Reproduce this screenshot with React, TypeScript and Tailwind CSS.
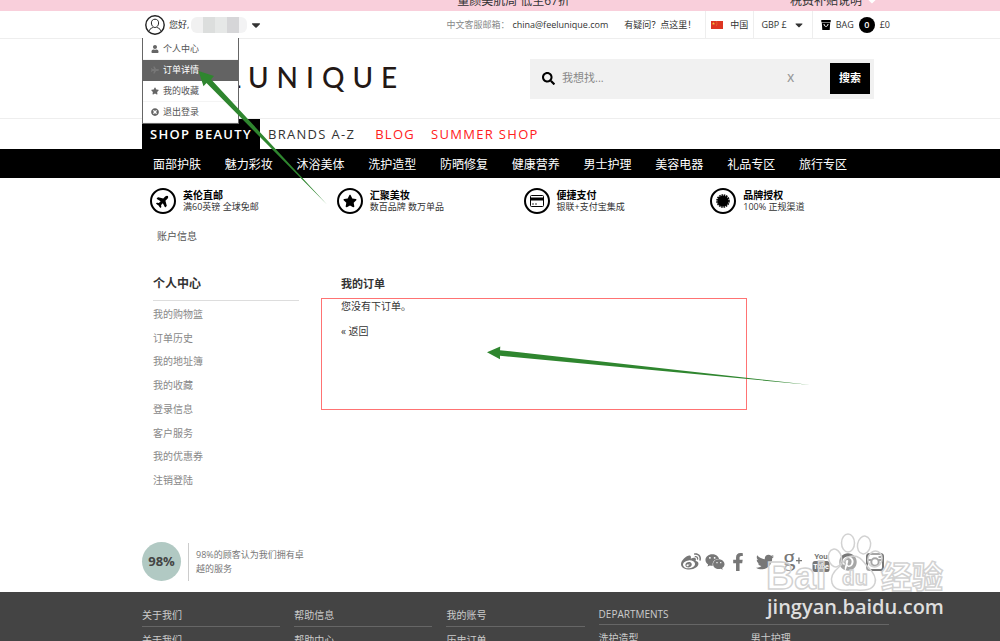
import { useState } from "react";
import { FaCaretDown, FaFacebookF, FaPinterest, FaPlane, FaSearch, FaStar, FaTimesCircle, FaTwitter, FaUser, FaWeibo, FaWeixin } from "react-icons/fa";

const accountMenu = [
  { label: '个人中心', icon: FaUser },
  { label: '订单详情', icon: FaPlane },
  { label: '我的收藏', icon: FaStar },
  { label: '退出登录', icon: FaTimesCircle },
]

const categories = ['面部护肤', '魅力彩妆', '沐浴美体', '洗护造型', '防晒修复', '健康营养', '男士护理', '美容电器', '礼品专区', '旅行专区']

const sideLinks = ['我的购物篮', '订单历史', '我的地址簿', '我的收藏', '登录信息', '客户服务', '我的优惠券', '注销登陆']

const footerColumns = [
  { title: '关于我们', link: '关于我们' },
  { title: '帮助信息', link: '帮助中心' },
  { title: '我的账号', link: '历史订单' },
]

function CardIcon() {
  return (
    <svg viewBox="0 0 14 12" className="w-[14px] h-3" fill="none" stroke="#000">
      <rect x="0.5" y="0.5" width="13" height="11" rx="1" />
      <path d="M0 4h14" strokeWidth="3" />
      <path d="M2 9h2M5 9h2" strokeWidth="0.8" />
    </svg>
  )
}

function SealIcon() {
  return (
    <svg viewBox="0 0 14 14" className="w-[14px] h-[14px]">
      <circle cx="7" cy="7" r="5.6" />
      <circle cx="7" cy="7" r="6" fill="none" stroke="#000" strokeWidth="1.6" strokeDasharray="1.6 0.76" />
    </svg>
  )
}

const benefits = [
  { title: '英伦直邮', text: '满60英镑 全球免邮', icon: <FaPlane className="-rotate-45" size={14} /> },
  { title: '汇聚美妆', text: '数百品牌 数万单品', icon: <FaStar size={14} /> },
  { title: '便捷支付', text: '银联+支付宝集成', icon: <CardIcon /> },
  { title: '品牌授权', text: '100% 正规渠道', icon: <SealIcon /> },
]

function Avatar() {
  return (
    <svg viewBox="0 0 20 20" className="w-5 h-5" fill="none" stroke="#222">
      <circle cx="10" cy="10" r="9.2" strokeWidth="1.4" />
      <path d="M10 4.2c-2.2 0-3.6 1.5-3.6 3.7 0 1.7.8 3.2 1.9 4-.2 1.2-3.7 1.2-4.1 4M10 4.2c2.2 0 3.6 1.5 3.6 3.7 0 1.7-.8 3.2-1.9 4 .2 1.2 3.7 1.2 4.1 4M8.3 11.9c1 .8 2.4.8 3.4 0" />
    </svg>
  )
}

function Flag() {
  return (
    <svg viewBox="0 0 12 8" className="w-3 h-2">
      <rect width="12" height="8" fill="#dd3522" />
      <path d="M2.5 1l.4 1.1h1.1l-.9.7.3 1.1-.9-.7-.9.7.3-1.1-.9-.7h1.1z" fill="#f5c23c" />
      <path d="M5 .8h.7M5.6 1.900h.7M5.6 3.100h.7M5 4.200h.7" stroke="#f5c23c" strokeWidth="0.5" />
    </svg>
  )
}

function BagIcon() {
  return (
    <svg viewBox="0 0 10 10" className="w-[10px] h-[10px]">
      <path d="M.3 0h9.4v2.2H.3zM.8 2.800h8.400L8.700 10H1.300z" />
      <path d="M3 4c0 3.2 4 3.2 4 0" fill="none" stroke="#fff" strokeWidth="1" />
    </svg>
  )
}

function GooglePlus() {
  return (
    <svg viewBox="0 0 20 20" className="w-5 h-5" fill="#777">
      <text x="0" y="14" fontFamily="Liberation Serif, serif" fontSize="25">g</text>
      <path d="M13 8h2.3V5.5h1.300V8H19v1.300h-2.400v2.500h-1.300V9.300H13z" />
    </svg>
  )
}

function YouTube() {
  return (
    <svg viewBox="0 0 18 20" className="w-[18px] h-5" fill="#777">
      <text x="9" y="7" textAnchor="middle" fontFamily="Roboto, sans-serif" fontWeight="700" fontSize="8">You</text>
      <rect x="0.5" y="9" width="17" height="11" rx="2.5" />
      <text x="9" y="17" textAnchor="middle" fill="#fff" fontFamily="Roboto, sans-serif" fontWeight="700" fontSize="7">Tube</text>
    </svg>
  )
}

function Instagram() {
  return (
    <svg viewBox="0 0 18 18" className="w-[18px] h-[18px]" fill="none" stroke="#777" strokeWidth="2">
      <rect x="1" y="1" width="16" height="16" rx="2.5" />
      <circle cx="9" cy="9" r="3.7" />
      <path d="M12.5 4h2.5M1 7h4.500M12.500 7H17" />
    </svg>
  )
}

function Watermark() {
  return (
    <svg viewBox="0 0 190 96" className="absolute left-[762px] top-[528px] w-[190px] h-24 pointer-events-none">
      <g fill="#fff" fillOpacity="0.35" stroke="#d2d2d2" strokeWidth="1.5">
        <ellipse cx="73" cy="30" rx="6.5" ry="9" transform="rotate(-12 73 30)" />
        <ellipse cx="86" cy="15" rx="6.5" ry="9" />
        <ellipse cx="102" cy="17" rx="6.5" ry="9" transform="rotate(10 102 17)" />
        <ellipse cx="113" cy="31" rx="7" ry="8" transform="rotate(20 113 31)" />
        <path d="M91 28c-8 0-9 7-14 11-6 5-9 10-7 16 3 9 13 7 21 7s19 2 22-7c2-6-2-11-7-16-5-5-7-11-15-11z" />
        <text x="4" y="61" fontFamily="Liberation Sans, sans-serif" fontWeight="700" fontSize="39">Bai</text>
        <text x="80" y="57" fontFamily="Open Sans, sans-serif" fontWeight="700" fontSize="20">du</text>
        <text x="119" y="60" fontFamily="Noto Sans CJK SC, sans-serif" fontWeight="700" fontSize="31">经验</text>
      </g>
      <text x="5" y="86" fill="#dedede" fontFamily="Open Sans, sans-serif" fontWeight="600" fontSize="20">jingyan.baidu.com</text>
    </svg>
  )
}

export default function App() {

  const [search, setSearch] = useState('')

  return (
    <div className="relative h-screen overflow-hidden bg-white text-[#333] font-['Open_Sans','Noto_Sans_CJK_SC',sans-serif]">
      <div className="flex items-end justify-end h-[11px] bg-[#f9cfdb] pr-[122px] text-xs leading-5">
        <div className="flex gap-[220px]">
          <span>量颜美肌周 低至67折</span>
          <span className="flex items-center gap-1">税费补贴说明 <FaCaretDown className="text-white" /></span>
        </div>
      </div>

      <header>
        <div className="flex justify-between h-7 pl-[145px] pr-[110px] border-b border-[#eee] text-[9px]">
          <div className="relative flex items-center gap-1">
            <Avatar />
            <button className="flex items-center">
              您好,
              <span className="flex mx-[2px] rounded-md overflow-hidden">
                <span className="w-3 h-4 bg-[#f1f1f1]" />
                <span className="w-3 h-4 bg-[#dcdedd]" />
                <span className="w-3 h-4 bg-[#e6e8e7]" />
                <span className="w-3 h-4 bg-[#d6d6d8]" />
                <span className="w-2 h-4 bg-[#f3f3f4]" />
              </span>
              <FaCaretDown size={14} />
            </button>
            <ul className="absolute z-10 top-[27px] -left-[3px] w-[97px] pt-px border-x border-b border-[#666] bg-white">
              {accountMenu.map(({ label, icon: Icon }) => (
                <li key={label} className={label === '订单详情' ? 'border-b border-[#636363] bg-[#636363] text-white' : 'border-b border-[#f4f4f4] text-[#555]'}>
                  <a href="#" className="flex items-center gap-1 h-5 pl-2">
                    <Icon size={8} className={label === '订单详情' ? 'text-[#777]' : 'text-[#666]'} />
                    {label}
                  </a>
                </li>
              ))}
            </ul>
          </div>
          <div className="flex items-center">
            <span className="mr-[3px] text-[#888]">中文客服邮箱：</span>
            <a href="mailto:china@feelunique.com">china@feelunique.com</a>
            <a href="#" className="ml-4 mr-[9px]">有疑问？点这里！</a>
            <button className="flex items-center gap-[7px] h-full px-[5px] border-l border-[#eee]"><Flag /> 中国</button>
            <button className="flex items-center gap-[6px] h-full px-[7px] border-x border-[#eee]">GBP £ <FaCaretDown size={12} /></button>
            <a href="#" className="flex items-center gap-[5px] pl-2">
              <BagIcon /> BAG
              <span className="flex items-center justify-center w-4 h-4 rounded-full bg-black text-white font-semibold">0</span>
              £0
            </a>
          </div>
        </div>

        <div className="flex items-center justify-between h-20 pl-[142px] pr-[126px] border-b border-[#eee]">
          <a href="#" className="pl-3 pb-1 font-['Lato'] text-[28px] leading-10 font-medium tracking-[8px] text-[#231815]">FEELUNIQUE</a>
          <form onSubmit={(e) => e.preventDefault()} className="flex items-center w-[344px] h-10 pl-3 pr-1 bg-[#f1f1f1]">
            <FaSearch size={13} color="#000" />
            <input
              aria-label="搜索"
              className="flex-1 min-w-0 px-[7px] outline-none text-[11px] placeholder:text-[#888]"
              type="text"
              placeholder="我想找..."
              value={search}
              onChange={(e) => { setSearch(e.target.value) }}
            />
            <button type="button" onClick={() => setSearch('')} className="px-9 text-[11px] font-semibold text-[#999]">X</button>
            <button className="w-10 h-[31px] bg-black text-white text-[11px] font-semibold">搜索</button>
          </form>
        </div>

        <nav className="flex h-[30px] pl-[142px] text-[13px] leading-[30px] tracking-widest">
          <a href="#" className="px-2 bg-black text-white font-semibold">SHOP BEAUTY</a>
          <a href="#" className="pl-2">BRANDS A-Z</a>
          <a href="#" className="pl-5 text-[#ff2020]">BLOG</a>
          <a href="#" className="pl-4 text-[#ff2020]">SUMMER SHOP</a>
        </nav>
        <nav className="flex items-center justify-between h-[29px] pt-[2px] px-[153px] bg-black text-white text-xs">
          {categories.map((category) => <a href="#" key={category}>{category}</a>)}
        </nav>
      </header>

      <section className="grid grid-cols-4 pl-[150px] pr-[103px] pt-[10px]">
        {benefits.map((benefit) => (
          <div key={benefit.title} className="flex items-center gap-[7px]">
            <span className="flex items-center justify-center w-[26px] h-[26px] rounded-full border-2 border-black text-black">{benefit.icon}</span>
            <div className="leading-3">
              <h3 className="text-[10px] font-bold text-black">{benefit.title}</h3>
              <p className="text-[9px]">{benefit.text}</p>
            </div>
          </div>
        ))}
      </section>

      <p className="pl-[157px] pt-3 text-[10px] leading-5 text-[#555]">账户信息</p>

      <main className="flex gap-[42px] pl-[153px] pt-7">
        <aside className="w-[146px]">
          <h2 className="h-[27px] border-b border-[#ddd] text-xs leading-5 font-bold">个人中心</h2>
          <ul className="flex flex-col justify-between h-[191px] pt-[2px] text-[10px] leading-[23px] text-[#888]">
            {sideLinks.map((link) => <li key={link}><a href="#">{link}</a></li>)}
          </ul>
        </aside>
        <section className="text-[10px] leading-5">
          <h1 className="text-[11px] font-bold">我的订单</h1>
          <p className="pt-[2px]">您没有下订单。</p>
          <a href="#" className="block pt-[5px]">« 返回</a>
        </section>
      </main>

      <section className="flex items-center justify-between pl-[142px] pr-[116px] pt-[50px] pb-[11px]">
        <div className="flex items-center">
          <span className="flex items-center justify-center w-[39px] h-[39px] rounded-full bg-[#b1c9c3] text-[13px] font-bold text-[#444]">98%</span>
          <p className="w-[120px] ml-[7px] pl-[7px] py-[5px] border-l border-[#ccc] text-[9px] leading-[14px] text-[#777]">98%的顾客认为我们拥有卓越的服务</p>
        </div>
        <div className="flex items-center gap-[9px] text-[#777]">
          <div className="flex items-center gap-1">
            <a href="#" aria-label="微博"><FaWeibo size={20} /></a>
            <a href="#" aria-label="微信"><FaWeixin size={20} /></a>
            <a href="#" aria-label="Facebook"><FaFacebookF size={18} /></a>
          </div>
          <a href="#" aria-label="Twitter"><FaTwitter size={18} /></a>
          <a href="#" aria-label="Google Plus"><GooglePlus /></a>
          <a href="#" aria-label="YouTube"><YouTube /></a>
          <a href="#" aria-label="Pinterest"><FaPinterest size={18} /></a>
          <a href="#" aria-label="Instagram"><Instagram /></a>
        </div>
      </section>

      <footer className="grid grid-cols-5 gap-x-[14px] pl-[142px] pr-[111px] pt-3 pb-6 bg-[#444] text-[10px] text-[#ccc]">
        {footerColumns.map((column) => (
          <div key={column.title}>
            <h4 className="h-[23px] border-b border-[#666] leading-[22px]">{column.title}</h4>
            <a href="#" className="block leading-[26px]">{column.link}</a>
          </div>
        ))}
        <div className="col-span-2">
          <h4 className="h-[21px] border-b border-[#666] leading-[21px]">DEPARTMENTS</h4>
          <div className="grid grid-cols-2 gap-x-[14px] leading-[26px]">
            <a href="#">洗护造型</a>
            <a href="#">男士护理</a>
          </div>
        </div>
      </footer>

      <div className="absolute left-[321px] top-[298px] w-[426px] h-[112px] border border-[#ff7373] pointer-events-none" />
      <svg className="absolute z-20 left-0 top-0 w-[1000px] h-[641px] pointer-events-none" viewBox="0 0 1000 641" fill="#2f862f">
        <path d="M198.5 71l15.5 5-3 3.2L327 204.5 206.500 83l-3 3.200z" />
        <path d="M487 352.3l13.3-5.8-.3 3.700L811 385 500 355.800v3.400z" />
      </svg>
      <Watermark />
    </div>
  );
}
